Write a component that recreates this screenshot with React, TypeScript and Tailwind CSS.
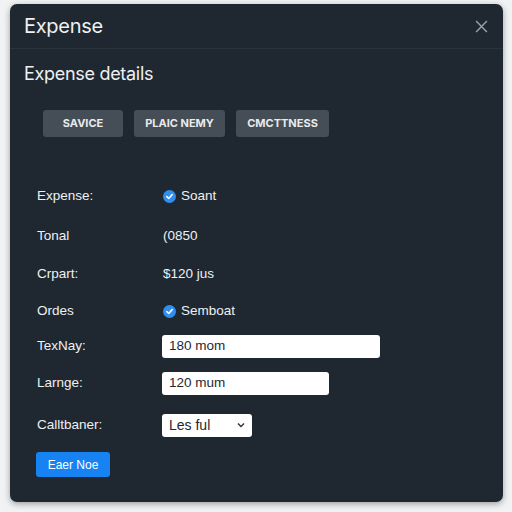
import React from "react";

function Check() {
  return (
    <span className="inline-flex h-[13px] w-[13px] items-center justify-center rounded-full bg-[#2f8ff0]">
      <svg width="9" height="9" viewBox="0 0 10 10" fill="none">
        <path d="M2 5.2 L4.2 7.2 L8 2.8" stroke="white" strokeWidth="1.8" strokeLinecap="round" strokeLinejoin="round" />
      </svg>
    </span>
  );
}

export default function App() {
  const font = { fontFamily: "Inter, 'Liberation Sans', sans-serif" };
  const body = { fontFamily: "'Liberation Sans', Arial, sans-serif" };
  return (
    <div className="h-[512px] w-[512px] bg-[#f1f2f3] pt-[4px] pl-[10px]" style={font}>
      <div className="h-[498px] w-[493px] rounded-[7px] bg-[#1f2831] text-[#eef0f2] shadow-[0_2px_6px_rgba(0,0,0,0.35)]">
        <div className="flex h-[45px] items-center justify-between border-b border-[#29333c] pl-[14px] pr-[15px]">
          <span className="text-[20px] tracking-[-0.3px]">Expense</span>
          <svg width="13" height="13" viewBox="0 0 12 12" stroke="#9aa3ab" strokeWidth="1.3">
            <path d="M1 1 L11 11 M11 1 L1 11" />
          </svg>
        </div>
        <div className="pl-[14px] pt-[11px] text-[18px] tracking-[-0.3px]">Expense details</div>
        <div className="flex gap-[11px] pl-[33px] pt-[23px]">
          <div className="flex h-[27px] w-[80px] items-center justify-center rounded-[3px] bg-[#454e57] text-[11px] font-bold text-[#e8eaec]">SAVICE</div>
          <div className="flex h-[27px] w-[91px] items-center justify-center rounded-[3px] bg-[#454e57] text-[11px] font-bold text-[#e8eaec]">PLAIC NEMY</div>
          <div className="flex h-[27px] w-[93px] items-center justify-center rounded-[3px] bg-[#454e57] text-[11px] font-bold text-[#e8eaec]">CMCTTNESS</div>
        </div>
        <div className="flex flex-col pl-[27px] pt-[46px] text-[13.5px]" style={body}>
          <div className="flex h-[26px] items-center">
            <span className="w-[126px]">Expense:</span>
            <span className="flex items-center gap-[5px]"><Check />Soant</span>
          </div>
          <div className="mt-[14px] flex h-[26px] items-center">
            <span className="w-[126px]">Tonal</span>
            <span>(0850</span>
          </div>
          <div className="mt-[12px] flex h-[26px] items-center">
            <span className="w-[126px]">Crpart:</span>
            <span>$120 jus</span>
          </div>
          <div className="mt-[11px] flex h-[26px] items-center">
            <span className="w-[126px]">Ordes</span>
            <span className="flex items-center gap-[5px]"><Check />Semboat</span>
          </div>
          <div className="mt-[10px] flex h-[24px] items-center">
            <span className="w-[125px]">TexNay:</span>
            <div className="flex h-[23px] w-[218px] items-center rounded-[3px] bg-white pl-[7px] text-[#1f2831]">180 mom</div>
          </div>
          <div className="mt-[13px] flex h-[24px] items-center">
            <span className="w-[125px]">Larnge:</span>
            <div className="flex h-[23px] w-[167px] items-center rounded-[3px] bg-white pl-[7px] text-[#1f2831]">120 mum</div>
          </div>
          <div className="mt-[18px] flex h-[24px] items-center">
            <span className="w-[125px]">Calltbaner:</span>
            <div className="flex h-[23px] w-[90px] items-center justify-between rounded-[3px] bg-white pl-[7px] pr-[7px] text-[#1f2831]">
              <span className="text-[14px]">Les ful</span>
              <svg width="8" height="6" viewBox="0 0 8 6"><path d="M1 1.5 L4 4.5 L7 1.5" stroke="#333" strokeWidth="1.4" fill="none" /></svg>
            </div>
          </div>
          <div className="mt-[15px] -ml-[1px] flex h-[25px] w-[74px] items-center justify-center rounded-[3px] bg-[#1783f2] text-[12px] text-white">Eaer Noe</div>
        </div>
      </div>
    </div>
  );
}
